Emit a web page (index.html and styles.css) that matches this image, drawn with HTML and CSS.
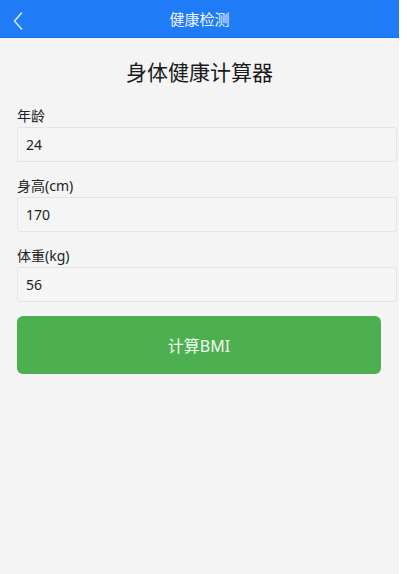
FILE: index.html
```html
<!DOCTYPE html>
<html>
	<head>
		<meta charset="UTF-8">
		<title>健康检测</title>
		<link rel="stylesheet" href="styles.css">
	</head>
	<body>
		<div id="app">
			<div class="header">
				<span class="back">
					<svg width="12" height="20" viewBox="0 0 12 20"><path d="M10 1.5 L2.5 10 L10 18.5" fill="none" stroke="#d6e7ff" stroke-width="1.6"/></svg>
				</span>
				<span class="header-title">健康检测</span>
			</div>
			<div class="content">
				<h1 class="title">身体健康计算器</h1>
				<div class="field">
					<label>年龄</label>
					<input type="text" value="24">
				</div>
				<div class="field">
					<label>身高(cm)</label>
					<input type="text" value="170">
				</div>
				<div class="field">
					<label>体重(kg)</label>
					<input type="text" value="56">
				</div>
				<button class="btn">计算BMI</button>
			</div>
		</div>
	</body>
</html>
```

FILE: styles.css
```css
body{
	margin: 0;
	background: #fff;
	font-family: "Noto Sans", "Noto Sans CJK SC", sans-serif;
	color: #222;
}
#app{
	width: 399px;
	min-height: 574px;
	background: #f4f4f4;
}
.header{
	height: 37px;
	background: #1f7cf6;
	border-bottom: 1px solid #1a6ee0;
	display: flex;
	align-items: center;
	justify-content: center;
	position: relative;
}
.back{
	position: absolute;
	left: 12px;
	top: 11px;
	line-height: 0;
}
.header-title{
	color: #eef5ff;
	font-size: 15px;
}
.content{
	padding: 0 17px;
}
.title{
	margin: 19px 0 19px;
	font-size: 21px;
	font-weight: normal;
	line-height: 30px;
	text-align: center;
	color: #1a1a1a;
}
.field{
	margin-bottom: 14px;
}
.field label{
	display: block;
	font-size: 14px;
	line-height: 20px;
	margin-bottom: 1px;
	color: #222;
}
.field input{
	display: block;
	box-sizing: border-box;
	width: 380px;
	height: 35px;
	margin: 0;
	padding: 0 8px;
	border: 1px solid #e4e4e4;
	border-radius: 3px;
	background: #f5f5f5;
	font-family: "Noto Sans", "Noto Sans CJK SC", sans-serif;
	font-size: 14px;
	color: #222;
	outline: none;
}
.btn{
	display: block;
	width: 364px;
	height: 58px;
	border: none;
	border-radius: 6px;
	background: #4caf50;
	color: #f0fbef;
	font-family: "Noto Sans", "Noto Sans CJK SC", sans-serif;
	font-size: 16px;
	cursor: pointer;
}
```
